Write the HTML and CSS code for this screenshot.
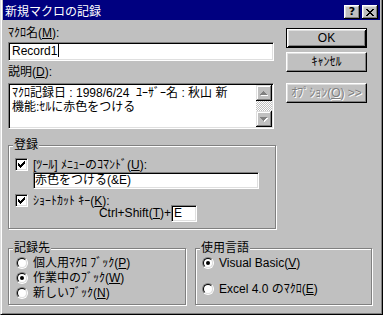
FILE: index.html
```html
<!DOCTYPE html>
<html lang="ja">
<head>
    <meta charset="UTF-8">
    <title>新規マクロの記録</title>
    <link rel="stylesheet" href="styles.css">
</head>
<body>
    <div class="window">
        <div class="titlebar">
            <span class="title">新規マクロの記録</span>
            <span class="caption-btn help">?</span>
            <span class="caption-btn close">
                <svg width="8" height="7" viewBox="0 0 8 7" shape-rendering="crispEdges"><path fill="#000" d="M0 0h2v1H0zM6 0h2v1H6zM1 1h2v1H1zM5 1h2v1H5zM2 2h4v1H2zM3 3h2v1H3zM2 4h4v1H2zM1 5h2v1H1zM5 5h2v1H5zM0 6h2v1H0zM6 6h2v1H6z"/></svg>
            </span>
        </div>

        <div class="dialog">
            <div class="top">
                <div class="left">
                    <div class="label">ﾏｸﾛ名(<u>M</u>):</div>
                    <div class="field name">Record1<span class="caret"></span></div>

                    <div class="label desc-label">説明(<u>D</u>):</div>
                    <div class="field memo">
                        <div class="memo-text">ﾏｸﾛ記録日 : 1998/6/24&nbsp;&nbsp;ﾕｰｻﾞｰ名 : 秋山 新<br>機能:ｾﾙに赤色をつける</div>
                        <div class="scrollbar">
                            <span class="sb-btn">
                                <svg width="8" height="5" viewBox="0 0 8 5" shape-rendering="crispEdges"><path fill="#fff" d="M4 1h1v1H4zM3 2h3v1H3zM2 3h5v1H2zM1 4h7v1H1z"/><path fill="#808080" d="M3 0h1v1H3zM2 1h3v1H2zM1 2h5v1H1zM0 3h7v1H0z"/></svg>
                            </span>
                            <span class="sb-track"></span>
                            <span class="sb-btn">
                                <svg width="8" height="5" viewBox="0 0 8 5" shape-rendering="crispEdges"><path fill="#fff" d="M1 1h7v1H1zM2 2h5v1H2zM3 3h3v1H3zM4 4h1v1H4z"/><path fill="#808080" d="M0 0h7v1H0zM1 1h5v1H1zM2 2h3v1H2zM3 3h1v1H3z"/></svg>
                            </span>
                        </div>
                    </div>

                    <div class="group reg">
                        <div class="group-title">登録</div>
                        <div class="check-row">
                            <span class="checkbox">
                                <svg width="7" height="7" viewBox="0 0 7 7" shape-rendering="crispEdges"><path fill="#000" d="M0 2h1v3H0zM1 3h1v3H1zM2 4h1v3H2zM3 3h1v3H3zM4 2h1v3H4zM5 1h1v3H5zM6 0h1v3H6z"/></svg>
                            </span>
                            <span>[ﾂｰﾙ] ﾒﾆｭｰのｺﾏﾝﾄﾞ(<u>U</u>):</span>
                        </div>
                        <div class="field menu-cmd">赤色をつける(&amp;E)</div>
                        <div class="check-row second">
                            <span class="checkbox">
                                <svg width="7" height="7" viewBox="0 0 7 7" shape-rendering="crispEdges"><path fill="#000" d="M0 2h1v3H0zM1 3h1v3H1zM2 4h1v3H2zM3 3h1v3H3zM4 2h1v3H4zM5 1h1v3H5zM6 0h1v3H6z"/></svg>
                            </span>
                            <span>ｼｮｰﾄｶｯﾄ ｷｰ(<u>K</u>):</span>
                        </div>
                        <div class="shortcut">
                            <span class="shortcut-text">Ctrl+Shift(<u>T</u>)+</span>
                            <span class="field key">E</span>
                        </div>
                    </div>
                </div>

                <div class="buttons">
                    <div class="btn default">OK</div>
                    <div class="btn cancel">ｷｬﾝｾﾙ</div>
                    <div class="btn options disabled">ｵﾌﾟｼｮﾝ(<u>O</u>) &gt;&gt;</div>
                </div>
            </div>

            <div class="bottom">
                <div class="group dest">
                    <div class="group-title">記録先</div>
                    <div class="radio-row">
                        <span class="radio"><span class="radio-in"></span></span>
                        <span>個人用ﾏｸﾛ ﾌﾞｯｸ(<u>P</u>)</span>
                    </div>
                    <div class="radio-row">
                        <span class="radio"><span class="radio-in"><span class="dot"></span></span></span>
                        <span>作業中のﾌﾞｯｸ(<u>W</u>)</span>
                    </div>
                    <div class="radio-row">
                        <span class="radio"><span class="radio-in"></span></span>
                        <span>新しいﾌﾞｯｸ(<u>N</u>)</span>
                    </div>
                </div>
                <div class="group lang">
                    <div class="group-title">使用言語</div>
                    <div class="radio-row">
                        <span class="radio"><span class="radio-in"><span class="dot"></span></span></span>
                        <span>Visual Basic(<u>V</u>)</span>
                    </div>
                    <div class="radio-row excel">
                        <span class="radio"><span class="radio-in"></span></span>
                        <span>Excel 4.0 のﾏｸﾛ(<u>E</u>)</span>
                    </div>
                </div>
            </div>
        </div>
    </div>
</body>
</html>
```

FILE: styles.css
```css
body {
    margin: 0;
    background: #c0c0c0;
    font-family: "Liberation Sans", "Noto Sans CJK JP", sans-serif;
    font-size: 12px;
    line-height: 14px;
    color: #000;
}
u {
    text-underline-offset: 1px;
}

/* окно */
.window {
    width: 383px;
    height: 315px;
    box-sizing: border-box;
    background: #c0c0c0;
    border-left: 1px solid #dfdfdf;
    border-right: 1px solid #000;
    border-bottom: 1px solid #000;
    box-shadow: inset 1px 0 #fff, inset -1px -1px #808080;
    padding: 0 2px 2px 2px;
}
.titlebar {
    height: 20px;
    box-sizing: border-box;
    padding: 4px 2px 0 2px;
    display: flex;
    align-items: center;
    background: #000080;
    color: #fff;
}
.title {
    flex: 1;
}
.caption-btn {
    width: 16px;
    height: 14px;
    box-sizing: border-box;
    display: flex;
    align-items: center;
    justify-content: center;
    background: #c0c0c0;
    color: #000;
    box-shadow: inset -1px -1px #000, inset 1px 1px #fff, inset -2px -2px #808080, inset 2px 2px #dfdfdf;
}
.help {
    font-family: "DejaVu Sans", sans-serif;
    font-weight: bold;
    font-size: 11px;
    line-height: 12px;
}
.close {
    margin-left: 2px;
}

/* содержимое */
.dialog {
    padding: 6px 0 0 5px;
}
.top {
    display: flex;
}
.left {
    width: 268px;
}
.label {
    height: 14px;
}
.desc-label {
    margin-top: 4px;
}

/* поля ввода */
.field {
    box-sizing: border-box;
    background: #fff;
    border: 1px solid;
    border-color: #808080 #fff #fff #808080;
    box-shadow: inset 1px 1px #000, inset -1px -1px #dfdfdf;
}
.name {
    margin-top: 2px;
    width: 266px;
    height: 19px;
    line-height: 17px;
    padding-left: 3px;
}
.caret {
    display: inline-block;
    width: 1px;
    height: 13px;
    margin-left: 1px;
    background: #000;
    vertical-align: -2px;
}
.memo {
    margin-top: 4px;
    width: 266px;
    height: 46px;
    padding: 1px;
    display: flex;
}
.memo-text {
    flex: 1;
    padding: 1px 0 0 2px;
    white-space: nowrap;
}
.scrollbar {
    width: 16px;
    display: flex;
    flex-direction: column;
}
.sb-btn {
    height: 16px;
    box-sizing: border-box;
    display: flex;
    align-items: center;
    justify-content: center;
    background: #c0c0c0;
    box-shadow: inset -1px -1px #000, inset 1px 1px #dfdfdf, inset -2px -2px #808080, inset 2px 2px #fff;
}
.sb-track {
    flex: 1;
    background-image: conic-gradient(#fff 25%, #c0c0c0 0 50%, #fff 0 75%, #c0c0c0 0);
    background-size: 2px 2px;
}

/* рамки групп */
.group {
    box-sizing: border-box;
    border: 1px solid #808080;
    box-shadow: inset 1px 1px #fff, 1px 1px #fff;
}
.group-title {
    width: fit-content;
    margin: -8px 0 0 4px;
    padding: 0 1px;
    background: #c0c0c0;
}
.reg {
    margin-top: 16px;
    width: 268px;
    padding-bottom: 6px;
}
.check-row {
    display: flex;
    align-items: center;
    gap: 5px;
    height: 13px;
    line-height: 12px;
    margin: 6px 0 0 6px;
}
.check-row.second {
    margin-top: 5px;
}
.checkbox {
    width: 13px;
    height: 13px;
    box-sizing: border-box;
    display: flex;
    align-items: center;
    justify-content: center;
    background: #fff;
    border: 1px solid;
    border-color: #808080 #fff #fff #808080;
    box-shadow: inset 1px 1px #000, inset -1px -1px #dfdfdf;
}
.menu-cmd {
    margin: 1px 0 0 24px;
    width: 226px;
    height: 17px;
    line-height: 15px;
    padding-left: 1px;
}
.shortcut {
    width: 188px;
    height: 17px;
    margin-top: -2px;
    display: flex;
    justify-content: flex-end;
}
.shortcut-text {
    margin-top: 2px;
    line-height: 12px;
}
.key {
    width: 26px;
    height: 17px;
    line-height: 15px;
    padding-left: 2px;
}

/* кнопки */
.buttons {
    margin-left: 10px;
    width: 81px;
}
.btn {
    height: 20px;
    box-sizing: border-box;
    display: flex;
    align-items: center;
    justify-content: center;
    border: 1px solid;
    border-color: #fff #000 #000 #fff;
    box-shadow: inset -1px -1px #808080, inset 1px 1px #dfdfdf;
}
.btn.default {
    margin-top: 2px;
    border-color: #000;
    box-shadow: inset 1px 1px #fff, inset -1px -1px #000, inset 2px 2px #dfdfdf, inset -2px -2px #808080;
}
.btn.cancel {
    margin-top: 4px;
}
.btn.options {
    margin-top: 11px;
}
.btn.disabled {
    color: #808080;
    text-shadow: 1px 1px #fff;
}

/* нижние группы */
.bottom {
    display: flex;
    gap: 9px;
    margin-top: 19px;
}
.dest {
    width: 178px;
    padding-bottom: 4px;
}
.lang {
    width: 177px;
}
.radio-row {
    display: flex;
    align-items: center;
    gap: 5px;
    height: 15px;
    margin-left: 7px;
}
.radio-row:first-of-type {
    margin-top: 1px;
}
.lang .radio-row {
    margin-left: 6px;
}
.radio-row.excel {
    margin-top: 11px;
}
.radio {
    width: 12px;
    height: 12px;
    box-sizing: border-box;
    border-radius: 50%;
    border: 1px solid;
    border-color: #808080 #fff #fff #808080;
}
.radio-in {
    width: 100%;
    height: 100%;
    box-sizing: border-box;
    display: flex;
    align-items: center;
    justify-content: center;
    border-radius: 50%;
    border: 1px solid;
    border-color: #000 #dfdfdf #dfdfdf #000;
    background: #fff;
}
.dot {
    width: 4px;
    height: 4px;
    border-radius: 50%;
    background: #000;
}
```
